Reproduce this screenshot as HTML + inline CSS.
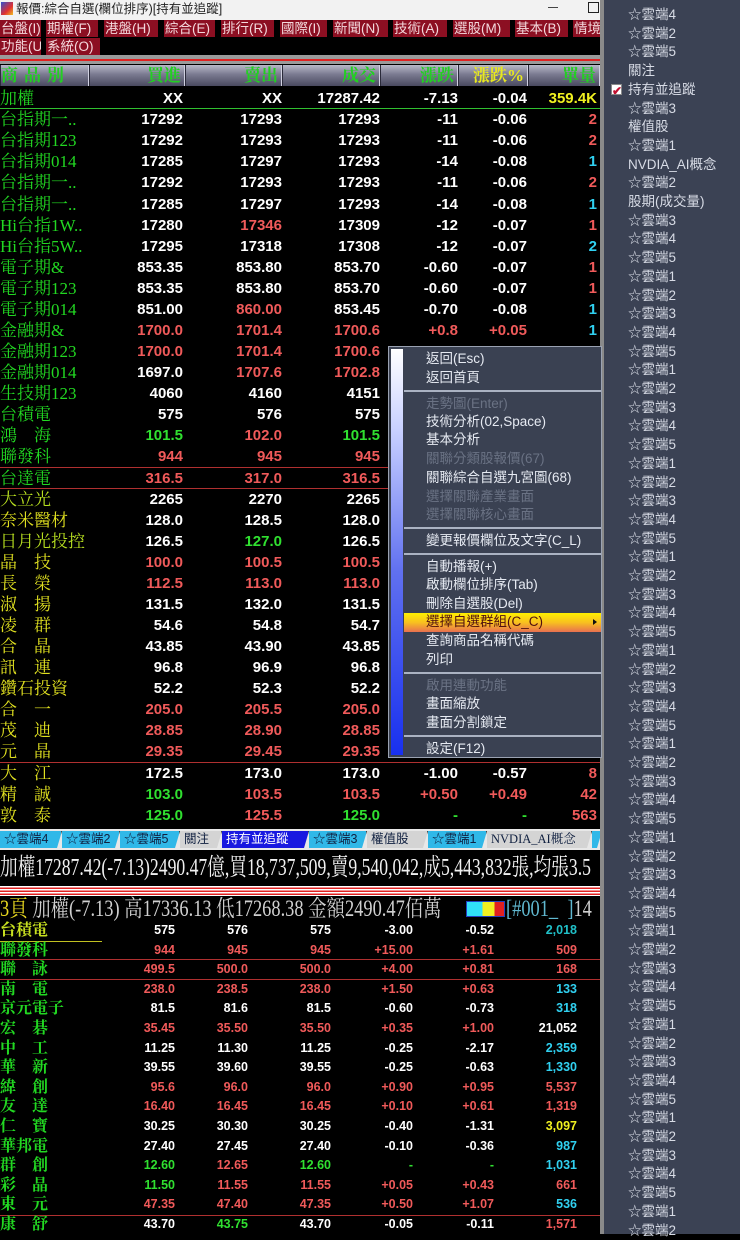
<!DOCTYPE html>
<html><head><meta charset="utf-8">
<style>
*{margin:0;padding:0;box-sizing:border-box}
body{width:740px;height:1234px;background:#000;position:relative;overflow:hidden;font-family:"Liberation Sans","Noto Sans CJK TC",sans-serif}
.abs{position:absolute}
#title{left:0;top:0;width:604px;height:20px;background:#f2f2f2;font-size:12.5px;color:#222;line-height:17px}
.mb{position:absolute;height:17px;background:#8c0f22;color:#f4d8dc;font-size:13.5px;line-height:17px;padding-left:1px;white-space:nowrap;overflow:hidden}
.hd{position:absolute;top:65px;height:21px;background:linear-gradient(#b8b8c8,#7a7a90 45%,#4a4a60);border-left:1px solid #2a2a3a;border-right:1px solid #d0d0e0;color:#22d022;font-family:"Liberation Serif","Noto Serif CJK SC",serif;font-size:17px;font-weight:bold;text-align:right;line-height:21px;padding-right:3px;white-space:nowrap;overflow:hidden}
.r{position:absolute;left:0;width:600px;height:21px;font-weight:bold;font-size:15px;line-height:21px;color:#fff}
.r b{position:absolute;font-weight:bold}
.r i{position:absolute;left:0;font-style:normal;font-weight:normal;font-family:"Liberation Serif","Noto Serif CJK SC",serif;font-size:17px;color:#22d822;letter-spacing:0}
.r .a{right:417px}.r .b{right:318px}.r .c{right:220px}.r .d{right:142px}.r .e{right:73px}.r .f{right:3px}
.s{position:absolute;left:0;width:600px;height:19.6px;font-weight:bold;font-size:12.5px;line-height:19.6px;color:#fff}
.s b{position:absolute}
.s i{position:absolute;left:0;font-style:normal;font-family:"Liberation Serif","Noto Serif CJK SC",serif;font-size:16px;color:#22d822}
.s .a{right:425px}.s .b{right:352px}.s .c{right:269px}.s .d{right:187px}.s .e{right:106px}.s .f{right:23px}
.R{color:#f05a5a!important}.G{color:#30e030!important}.Y{color:#f0f020!important}.C{color:#30d0f0!important}.Cy{color:#20c0c8!important}
.yl{color:#e0e020!important}
.ln{position:absolute;left:0;width:600px;height:1px;background:#b03030}
.tab{position:absolute;top:831px;height:17px;font-size:12.5px;line-height:17px;color:#102040;padding-left:4px;white-space:nowrap;overflow:hidden;border-right:1px solid #333;clip-path:polygon(0 0,100% 0,calc(100% - 5px) 100%,0 100%)}
#menu{left:388px;top:346px;width:214px;height:412px;background:#3a4152;border:1px solid #9aa2b2}
#menu .strip{position:absolute;left:2px;top:2px;width:12px;bottom:2px;background:linear-gradient(#ffffff,#c8d0ff 20%,#6070f0 55%,#1830f0)}
.mi{position:absolute;left:37px;font-size:13.5px;color:#e6eaf2;line-height:18px;white-space:nowrap}
.dis{color:#6a7284}
.sep{position:absolute;left:15px;right:0;height:2px;background:#aab2c2}
#rp{left:604px;top:0;width:136px;height:1234px;background:#3b4254}
#rp div{position:absolute;left:24px;font-size:13.5px;color:#d8dce6;line-height:18px;white-space:nowrap}
</style></head><body>

<div id="title" class="abs">
 <div class="abs" style="left:1px;top:2px;width:12px;height:13px;background:linear-gradient(135deg,#3050d0,#e03030 60%,#f0c020)"></div>
 <div class="abs" style="left:16px;top:1px">報價:綜合自選(欄位排序)[持有並追蹤]</div>
 <div class="abs" style="left:548px;top:7px;width:10px;height:1px;background:#444"></div>
 <div class="abs" style="left:588px;top:2px;width:11px;height:11px;border:1.5px solid #222"></div>
</div>

<div class="abs" style="left:0;top:20px;width:604px;height:35px;background:#000"></div>
<div class="mb" style="left:0;top:20px;width:41px">台盤(I)</div>
<div class="mb" style="left:46px;top:20px;width:52px">期權(F)</div>
<div class="mb" style="left:104px;top:20px;width:54px">港盤(H)</div>
<div class="mb" style="left:164px;top:20px;width:51px">綜合(E)</div>
<div class="mb" style="left:221px;top:20px;width:53px">排行(R)</div>
<div class="mb" style="left:280px;top:20px;width:47px">國際(I)</div>
<div class="mb" style="left:333px;top:20px;width:55px">新聞(N)</div>
<div class="mb" style="left:393px;top:20px;width:54px">技術(A)</div>
<div class="mb" style="left:453px;top:20px;width:57px">選股(M)</div>
<div class="mb" style="left:515px;top:20px;width:53px">基本(B)</div>
<div class="mb" style="left:573px;top:20px;width:28px">情境</div>
<div class="mb" style="left:0;top:38px;width:41px">功能(U)</div>
<div class="mb" style="left:46px;top:38px;width:54px">系統(O)</div>
<div class="abs" style="left:0;top:55px;width:604px;height:9px;background:#9a9a9a"></div>
<div class="abs" style="left:0;top:59px;width:604px;height:2px;background:#e02020"></div>

<div class="hd" style="left:0;width:89px;text-align:left;padding-left:0;letter-spacing:6px">商品別</div>
<div class="hd" style="left:89px;width:96px">買進</div>
<div class="hd" style="left:185px;width:97px">賣出</div>
<div class="hd" style="left:282px;width:98px">成交</div>
<div class="hd" style="left:380px;width:78px">漲跌</div>
<div class="hd" style="left:458px;width:70px;color:#e8e820">漲跌%</div>
<div class="hd" style="left:528px;width:72px">單量</div>

<div class="r" style="top:88px"><i>加權</i><b class="a">XX</b><b class="b">XX</b><b class="c">17287.42</b><b class="d">-7.13</b><b class="e">-0.04</b><b class="f Y">359.4K</b></div>
<div class="abs" style="left:0;top:108px;width:600px;height:1px;background:#30c030"></div>
<div class="r" style="top:109px"><i>台指期一..</i><b class="a">17292</b><b class="b">17293</b><b class="c">17293</b><b class="d">-11</b><b class="e">-0.06</b><b class="f R">2</b></div>
<div class="r" style="top:130px"><i>台指期123</i><b class="a">17292</b><b class="b">17293</b><b class="c">17293</b><b class="d">-11</b><b class="e">-0.06</b><b class="f R">2</b></div>
<div class="r" style="top:151px"><i>台指期014</i><b class="a">17285</b><b class="b">17297</b><b class="c">17293</b><b class="d">-14</b><b class="e">-0.08</b><b class="f C">1</b></div>
<div class="r" style="top:172px"><i>台指期一..</i><b class="a">17292</b><b class="b">17293</b><b class="c">17293</b><b class="d">-11</b><b class="e">-0.06</b><b class="f R">2</b></div>
<div class="r" style="top:194px"><i>台指期一..</i><b class="a">17285</b><b class="b">17297</b><b class="c">17293</b><b class="d">-14</b><b class="e">-0.08</b><b class="f C">1</b></div>
<div class="r" style="top:215px"><i>Hi台指1W..</i><b class="a">17280</b><b class="b R">17346</b><b class="c">17309</b><b class="d">-12</b><b class="e">-0.07</b><b class="f R">1</b></div>
<div class="r" style="top:236px"><i>Hi台指5W..</i><b class="a">17295</b><b class="b">17318</b><b class="c">17308</b><b class="d">-12</b><b class="e">-0.07</b><b class="f C">2</b></div>
<div class="r" style="top:257px"><i>電子期&amp;</i><b class="a">853.35</b><b class="b">853.80</b><b class="c">853.70</b><b class="d">-0.60</b><b class="e">-0.07</b><b class="f R">1</b></div>
<div class="r" style="top:278px"><i>電子期123</i><b class="a">853.35</b><b class="b">853.80</b><b class="c">853.70</b><b class="d">-0.60</b><b class="e">-0.07</b><b class="f R">1</b></div>
<div class="r" style="top:299px"><i>電子期014</i><b class="a">851.00</b><b class="b R">860.00</b><b class="c">853.45</b><b class="d">-0.70</b><b class="e">-0.08</b><b class="f C">1</b></div>
<div class="r" style="top:320px"><i>金融期&amp;</i><b class="a R">1700.0</b><b class="b R">1701.4</b><b class="c R">1700.6</b><b class="d R">+0.8</b><b class="e R">+0.05</b><b class="f C">1</b></div>
<div class="r" style="top:341px"><i>金融期123</i><b class="a R">1700.0</b><b class="b R">1701.4</b><b class="c R">1700.6</b></div>
<div class="r" style="top:362px"><i>金融期014</i><b class="a">1697.0</b><b class="b R">1707.6</b><b class="c R">1702.8</b></div>
<div class="r" style="top:383px"><i>生技期123</i><b class="a">4060</b><b class="b">4160</b><b class="c">4151</b></div>
<div class="r" style="top:404px"><i>台積電</i><b class="a">575</b><b class="b">576</b><b class="c">575</b></div>
<div class="r" style="top:425px"><i>鴻　海</i><b class="a G">101.5</b><b class="b R">102.0</b><b class="c G">101.5</b></div>
<div class="r" style="top:446px"><i>聯發科</i><b class="a R">944</b><b class="b R">945</b><b class="c R">945</b></div>
<div class="ln" style="top:467px"></div>
<div class="r" style="top:468px"><i>台達電</i><b class="a R">316.5</b><b class="b R">317.0</b><b class="c R">316.5</b></div>
<div class="ln" style="top:488px"></div>
<div class="r" style="top:489px"><i class="yl" style="color:#b8e020!important">大立光</i><b class="a">2265</b><b class="b">2270</b><b class="c">2265</b></div>
<div class="r" style="top:510px"><i class="yl">奈米醫材</i><b class="a">128.0</b><b class="b">128.5</b><b class="c">128.0</b></div>
<div class="r" style="top:531px"><i class="yl" style="color:#b8e020!important">日月光投控</i><b class="a">126.5</b><b class="b G">127.0</b><b class="c">126.5</b></div>
<div class="r" style="top:552px"><i class="yl">晶　技</i><b class="a R">100.0</b><b class="b R">100.5</b><b class="c R">100.5</b></div>
<div class="r" style="top:573px"><i class="yl">長　榮</i><b class="a R">112.5</b><b class="b R">113.0</b><b class="c R">113.0</b></div>
<div class="r" style="top:594px"><i class="yl">淑　揚</i><b class="a">131.5</b><b class="b">132.0</b><b class="c">131.5</b></div>
<div class="r" style="top:615px"><i class="yl">凌　群</i><b class="a">54.6</b><b class="b">54.8</b><b class="c">54.7</b></div>
<div class="r" style="top:636px"><i class="yl">合　晶</i><b class="a">43.85</b><b class="b">43.90</b><b class="c">43.85</b></div>
<div class="r" style="top:657px"><i class="yl">訊　連</i><b class="a">96.8</b><b class="b">96.9</b><b class="c">96.8</b></div>
<div class="r" style="top:678px"><i class="yl">鑽石投資</i><b class="a">52.2</b><b class="b">52.3</b><b class="c">52.2</b></div>
<div class="r" style="top:699px"><i class="yl">合　一</i><b class="a R">205.0</b><b class="b R">205.5</b><b class="c R">205.0</b></div>
<div class="r" style="top:720px"><i class="yl">茂　迪</i><b class="a R">28.85</b><b class="b R">28.90</b><b class="c R">28.85</b></div>
<div class="r" style="top:741px"><i class="yl">元　晶</i><b class="a R">29.35</b><b class="b R">29.45</b><b class="c R">29.35</b></div>
<div class="ln" style="top:762px"></div>
<div class="r" style="top:763px"><i class="yl">大　江</i><b class="a">172.5</b><b class="b">173.0</b><b class="c">173.0</b><b class="d">-1.00</b><b class="e">-0.57</b><b class="f R">8</b></div>
<div class="r" style="top:784px"><i class="yl">精　誠</i><b class="a G">103.0</b><b class="b R">103.5</b><b class="c R">103.5</b><b class="d R">+0.50</b><b class="e R">+0.49</b><b class="f R">42</b></div>
<div class="r" style="top:805px"><i class="yl">敦　泰</i><b class="a G">125.0</b><b class="b R">125.5</b><b class="c G">125.0</b><b class="d G">-</b><b class="e G">-</b><b class="f R">563</b></div>

<!-- tabs -->
<div class="abs" style="left:0;top:829px;width:604px;height:21px;background:#e8e8e8"></div>
<div class="tab" style="left:0;width:62px;background:#30b8e8">☆雲端4</div>
<div class="tab" style="left:62px;width:58px;background:#30b8e8">☆雲端2</div>
<div class="tab" style="left:120px;width:60px;background:#30b8e8">☆雲端5</div>
<div class="tab" style="left:180px;width:42px;background:#d4d4d4">關注</div>
<div class="tab" style="left:222px;width:87px;background:#1818e0;color:#fff">持有並追蹤</div>
<div class="tab" style="left:309px;width:58px;background:#30b8e8">☆雲端3</div>
<div class="tab" style="left:367px;width:61px;background:#d4d4d4">權值股</div>
<div class="tab" style="left:428px;width:59px;background:#30b8e8">☆雲端1</div>
<div class="tab" style="left:487px;width:105px;background:#d4d4d4;font-family:'Liberation Serif','Noto Serif CJK SC',serif">NVDIA_AI概念</div>
<div class="tab" style="left:592px;width:10px;background:#30b8e8"></div>

<div class="abs" style="left:0;top:853px;white-space:nowrap;font-family:'Liberation Serif','Noto Serif CJK SC',serif;font-size:24px;color:#f0f0f0;line-height:30px;transform:scaleX(0.735);transform-origin:0 0">加權17287.42(-7.13)2490.47億,買18,737,509,賣9,540,042,成5,443,832張,均張3.5</div>

<div class="abs" style="left:0;top:886px;width:604px;height:10px;background:repeating-linear-gradient(#fff 0 1.5px,#e02020 1.5px 3px)"></div>

<div class="abs" style="left:0;top:895px;white-space:nowrap;font-family:'Liberation Serif','Noto Serif CJK SC',serif;font-size:23px;color:#d0d0d0;line-height:28px;transform:scaleX(0.8);transform-origin:0 0"><span style="color:#e8d820">3頁</span> 加權(-7.13) 高17336.13 低17268.38 金額2490.47佰萬</div>
<div class="abs" style="left:466px;top:901px;width:39px;height:16px;border:1px solid #2040c0;background:linear-gradient(90deg,#30e0f8 0 42%,#f0f020 42% 75%,#e02020 75%)"></div>
<div class="abs" style="left:506px;top:895px;white-space:nowrap;font-family:'Liberation Serif',serif;font-size:23px;color:#60b8d0;line-height:28px;transform:scaleX(0.8);transform-origin:0 0">[#001_ &nbsp;]<span style="color:#d0d0d0">14</span></div>

<div class="s" style="top:921px"><i class="yl" style="color:#c8e020!important;border-bottom:1px solid #c0c020;width:102px">台積電</i><b class="a">575</b><b class="b">576</b><b class="c">575</b><b class="d">-3.00</b><b class="e">-0.52</b><b class="f Cy">2,018</b></div>
<div class="s" style="top:940.6px"><i>聯發科</i><b class="a R">944</b><b class="b R">945</b><b class="c R">945</b><b class="d R">+15.00</b><b class="e R">+1.61</b><b class="f R">509</b></div>
<div class="ln" style="top:959px"></div>
<div class="s" style="top:960.2px"><i>聯　詠</i><b class="a R">499.5</b><b class="b R">500.0</b><b class="c R">500.0</b><b class="d R">+4.00</b><b class="e R">+0.81</b><b class="f R">168</b></div>
<div class="ln" style="top:979px"></div>
<div class="s" style="top:979.8px"><i>南　電</i><b class="a R">238.0</b><b class="b R">238.5</b><b class="c R">238.0</b><b class="d R">+1.50</b><b class="e R">+0.63</b><b class="f C">133</b></div>
<div class="s" style="top:999.4px"><i>京元電子</i><b class="a">81.5</b><b class="b">81.6</b><b class="c">81.5</b><b class="d">-0.60</b><b class="e">-0.73</b><b class="f C">318</b></div>
<div class="s" style="top:1019px"><i>宏　碁</i><b class="a R">35.45</b><b class="b R">35.50</b><b class="c R">35.50</b><b class="d R">+0.35</b><b class="e R">+1.00</b><b class="f">21,052</b></div>
<div class="s" style="top:1038.6px"><i>中　工</i><b class="a">11.25</b><b class="b">11.30</b><b class="c">11.25</b><b class="d">-0.25</b><b class="e">-2.17</b><b class="f C">2,359</b></div>
<div class="s" style="top:1058.2px"><i>華　新</i><b class="a">39.55</b><b class="b">39.60</b><b class="c">39.55</b><b class="d">-0.25</b><b class="e">-0.63</b><b class="f C">1,330</b></div>
<div class="s" style="top:1077.8px"><i>緯　創</i><b class="a R">95.6</b><b class="b R">96.0</b><b class="c R">96.0</b><b class="d R">+0.90</b><b class="e R">+0.95</b><b class="f R">5,537</b></div>
<div class="s" style="top:1097.4px"><i>友　達</i><b class="a R">16.40</b><b class="b R">16.45</b><b class="c R">16.45</b><b class="d R">+0.10</b><b class="e R">+0.61</b><b class="f R">1,319</b></div>
<div class="s" style="top:1117px"><i>仁　寶</i><b class="a">30.25</b><b class="b">30.30</b><b class="c">30.25</b><b class="d">-0.40</b><b class="e">-1.31</b><b class="f Y">3,097</b></div>
<div class="s" style="top:1136.6px"><i>華邦電</i><b class="a">27.40</b><b class="b">27.45</b><b class="c">27.40</b><b class="d">-0.10</b><b class="e">-0.36</b><b class="f C">987</b></div>
<div class="s" style="top:1156.2px"><i>群　創</i><b class="a G">12.60</b><b class="b R">12.65</b><b class="c G">12.60</b><b class="d G">-</b><b class="e G">-</b><b class="f C">1,031</b></div>
<div class="s" style="top:1175.8px"><i>彩　晶</i><b class="a G">11.50</b><b class="b R">11.55</b><b class="c R">11.55</b><b class="d R">+0.05</b><b class="e R">+0.43</b><b class="f R">661</b></div>
<div class="s" style="top:1195.4px"><i>東　元</i><b class="a R">47.35</b><b class="b R">47.40</b><b class="c R">47.35</b><b class="d R">+0.50</b><b class="e R">+1.07</b><b class="f C">536</b></div>
<div class="ln" style="top:1215px"></div>
<div class="s" style="top:1215px"><i>康　舒</i><b class="a">43.70</b><b class="b G">43.75</b><b class="c">43.70</b><b class="d">-0.05</b><b class="e">-0.11</b><b class="f R">1,571</b></div>

<!-- divider -->
<div class="abs" style="left:600px;top:0;width:4px;height:1234px;background:#8a8a8a"></div>

<!-- context menu -->
<div id="menu" class="abs"><div class="strip"></div>
 <div class="mi" style="top:3px">返回(Esc)</div>
 <div class="mi" style="top:22px">返回首頁</div>
 <div class="sep" style="top:43px"></div>
 <div class="mi dis" style="top:48px">走勢圖(Enter)</div>
 <div class="mi" style="top:66px">技術分析(02,Space)</div>
 <div class="mi" style="top:84px">基本分析</div>
 <div class="mi dis" style="top:103px">關聯分類股報價(67)</div>
 <div class="mi" style="top:122px">關聯綜合自選九宮圖(68)</div>
 <div class="mi dis" style="top:141px">選擇關聯產業畫面</div>
 <div class="mi dis" style="top:159px">選擇關聯核心畫面</div>
 <div class="sep" style="top:180px"></div>
 <div class="mi" style="top:185px">變更報價欄位及文字(C_L)</div>
 <div class="sep" style="top:206px"></div>
 <div class="mi" style="top:211px">自動播報(+)</div>
 <div class="mi" style="top:229px">啟動欄位排序(Tab)</div>
 <div class="mi" style="top:248px">刪除自選股(Del)</div>
 <div class="abs" style="left:15px;right:0;top:266px;height:19px;background:linear-gradient(#fff000,#f8c020 50%,#e87050)"></div>
 <div class="mi" style="top:266px;color:#501010">選擇自選群組(C_C)</div>
 <div class="abs" style="left:204px;top:272px;width:0;height:0;border-left:4px solid #111;border-top:3.5px solid transparent;border-bottom:3.5px solid transparent"></div>
 <div class="mi" style="top:285px">查詢商品名稱代碼</div>
 <div class="mi" style="top:304px">列印</div>
 <div class="sep" style="top:325px"></div>
 <div class="mi dis" style="top:330px">啟用連動功能</div>
 <div class="mi" style="top:348px">畫面縮放</div>
 <div class="mi" style="top:367px">畫面分割鎖定</div>
 <div class="sep" style="top:388px"></div>
 <div class="mi" style="top:393px">設定(F12)</div>
</div>

<!-- right panel -->
<div id="rp" class="abs">
 <div class="abs" style="left:7px!important;top:84px;width:11px;height:11px;background:#fff;border:1px solid #888"></div>
 <div class="abs" style="left:8px!important;top:82px;font-size:12px!important;color:#c01030!important;font-weight:bold">✔</div>
 <div style="top:6px">☆雲端4</div>
 <div style="top:24.7px">☆雲端2</div>
 <div style="top:43.4px">☆雲端5</div>
 <div style="top:62.1px">關注</div>
 <div style="top:80.8px">持有並追蹤</div>
 <div style="top:99.5px">☆雲端3</div>
 <div style="top:118.2px">權值股</div>
 <div style="top:136.9px">☆雲端1</div>
 <div style="top:155.6px">NVDIA_AI概念</div>
 <div style="top:174.3px">☆雲端2</div>
 <div style="top:193px">股期(成交量)</div>
 <div style="top:211.7px">☆雲端3</div><div style="top:230.4px">☆雲端4</div><div style="top:249.1px">☆雲端5</div><div style="top:267.8px">☆雲端1</div><div style="top:286.5px">☆雲端2</div>
 <div style="top:305.2px">☆雲端3</div><div style="top:323.9px">☆雲端4</div><div style="top:342.6px">☆雲端5</div><div style="top:361.3px">☆雲端1</div><div style="top:380px">☆雲端2</div>
 <div style="top:398.7px">☆雲端3</div><div style="top:417.4px">☆雲端4</div><div style="top:436.1px">☆雲端5</div><div style="top:454.8px">☆雲端1</div><div style="top:473.5px">☆雲端2</div>
 <div style="top:492.2px">☆雲端3</div><div style="top:510.9px">☆雲端4</div><div style="top:529.6px">☆雲端5</div><div style="top:548.3px">☆雲端1</div><div style="top:567px">☆雲端2</div>
 <div style="top:585.7px">☆雲端3</div><div style="top:604.4px">☆雲端4</div><div style="top:623.1px">☆雲端5</div><div style="top:641.8px">☆雲端1</div><div style="top:660.5px">☆雲端2</div>
 <div style="top:679.2px">☆雲端3</div><div style="top:697.9px">☆雲端4</div><div style="top:716.6px">☆雲端5</div><div style="top:735.3px">☆雲端1</div><div style="top:754px">☆雲端2</div>
 <div style="top:772.7px">☆雲端3</div><div style="top:791.4px">☆雲端4</div><div style="top:810.1px">☆雲端5</div><div style="top:828.8px">☆雲端1</div><div style="top:847.5px">☆雲端2</div>
 <div style="top:866.2px">☆雲端3</div><div style="top:884.9px">☆雲端4</div><div style="top:903.6px">☆雲端5</div><div style="top:922.3px">☆雲端1</div><div style="top:941px">☆雲端2</div>
 <div style="top:959.7px">☆雲端3</div><div style="top:978.4px">☆雲端4</div><div style="top:997.1px">☆雲端5</div><div style="top:1015.8px">☆雲端1</div><div style="top:1034.5px">☆雲端2</div>
 <div style="top:1053.2px">☆雲端3</div><div style="top:1071.9px">☆雲端4</div><div style="top:1090.6px">☆雲端5</div><div style="top:1109.3px">☆雲端1</div><div style="top:1128px">☆雲端2</div>
 <div style="top:1146.7px">☆雲端3</div><div style="top:1165.4px">☆雲端4</div><div style="top:1184.1px">☆雲端5</div><div style="top:1202.8px">☆雲端1</div><div style="top:1221.5px">☆雲端2</div>
</div>
</body></html>
